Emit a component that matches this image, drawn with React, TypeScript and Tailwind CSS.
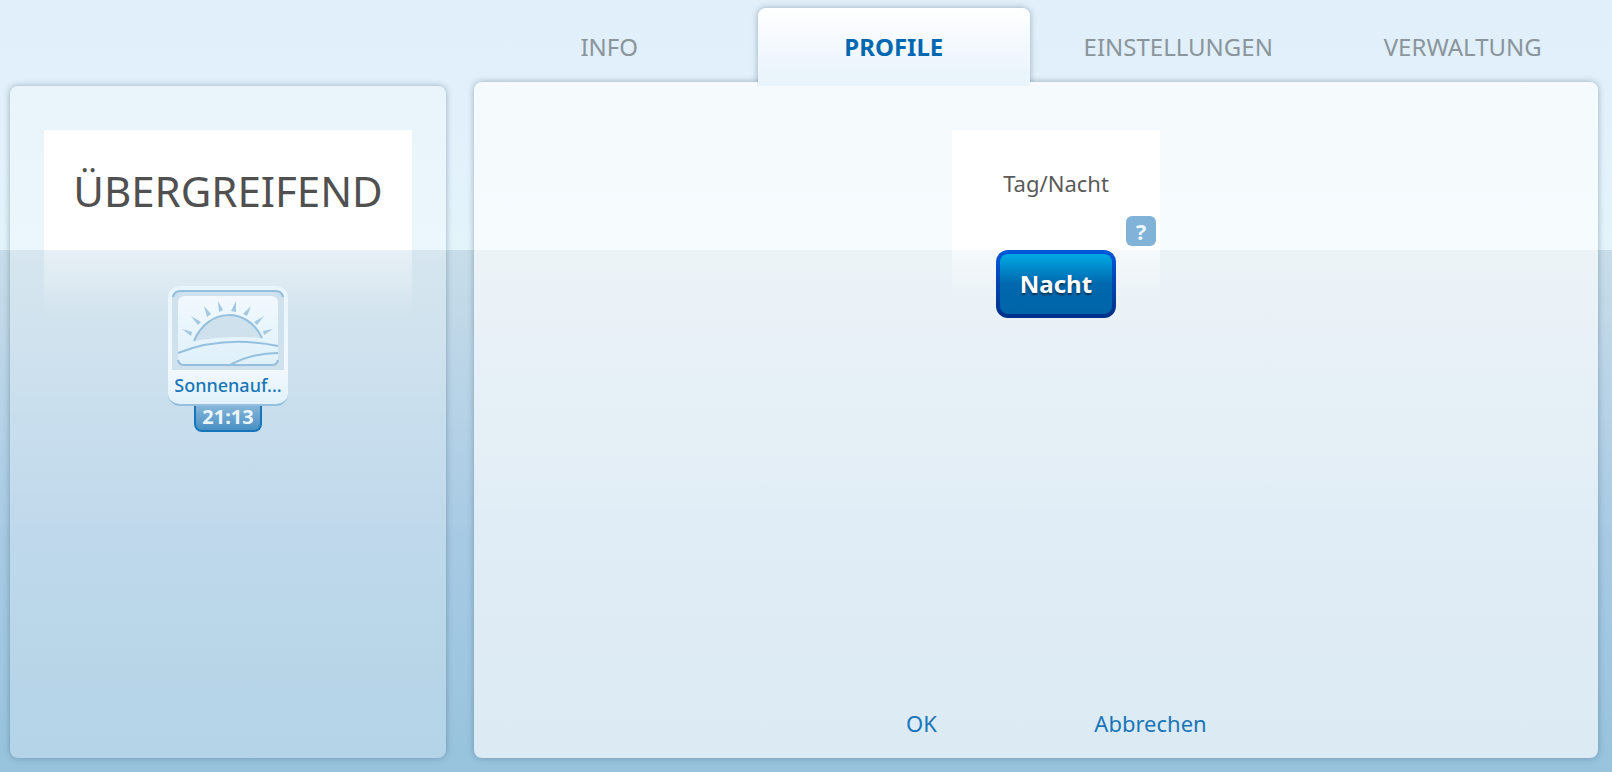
import React, { useState } from "react";

const tabs = ["INFO", "PROFILE", "EINSTELLUNGEN", "VERWALTUNG"];

const SunriseIcon = () => (
  <svg
    className="block h-20 w-28"
    aria-hidden="true"
    viewBox="0 0 112 80"
    fill="none"
  >
    <defs>
      <linearGradient id="sky" x1="0" y1="0" x2="0" y2="1">
        <stop offset="0" stopColor="#f2f9fe" />
        <stop offset="1" stopColor="#def0fa" />
      </linearGradient>
    </defs>
    <path d="M0 80V8Q0 0 8 0H104Q112 0 112 8V80Z" fill="#cfe1ed" />
    <path
      d="M1 7Q2 1 9 1H103Q110 1 111 7"
      stroke="#94bfde"
      strokeWidth="2"
    />
    <rect x="6" y="6" width="100" height="70" rx="6" fill="url(#sky)" />
    {/* Rays */}
    <g fill="#a3c8e2">
      <path d="M10 39L20 42L19 46Z" />
      <path d="M19 26L29 32L26 35Z" />
      <path d="M32 16L39 24L35 27Z" />
      <path d="M46 11L51 20L47 22Z" />
      <path d="M64 11L59 21L64 22Z" />
      <path d="M79 16L71 24L75 26Z" />
      <path d="M92 26L82 32L85 35Z" />
      <path d="M101 39L91 41L92 45Z" />
    </g>
    {/* Sun */}
    <path d="M22 51C36 17 76 17 90 48Q56 45 22 51Z" fill="#cfe1ed" />
    <path
      d="M22 51C36 17 76 17 90 48"
      stroke="#94bfde"
      strokeWidth="2"
    />
    {/* Hills */}
    <path d="M6 63Q52 45 106 56" stroke="#94bfde" strokeWidth="2" />
    <path d="M58 75Q80 63 106 63" stroke="#94bfde" strokeWidth="2" />
    <path
      d="M6 70Q7 75 12 75H100Q105 75 106 70"
      stroke="#94bfde"
      strokeWidth="2"
    />
  </svg>
);

const App = () => {
  const [active, setActive] = useState("PROFILE");

  return (
    <div className="flex min-h-screen bg-[linear-gradient(#e1effa_0,#e1f0fa_100px,#e4f4fb_250px,#c8dde9_250px,#b7d3e7_400px,#a7cae4_540px,#97c3dd_100%)] pr-3.5 pb-3.5 pl-2.5 font-['Noto_Sans',sans-serif]">
      {/* Sidebar */}
      <aside className="mt-[86px] flex w-[436px] shrink-0 flex-col items-center rounded-lg bg-white/27 px-[34px] pt-11 shadow-[0_0_6px_rgba(60,90,110,0.45)]">
        <h1 className="h-[190px] w-full bg-[linear-gradient(#fff_120px,rgba(255,255,255,0.4)_120px,transparent_188px)] pt-9 text-center text-[42px] leading-[50px] text-[#505050]">
          ÜBERGREIFEND
        </h1>
        <button className="-mt-[34px] flex flex-col items-center">
          <span className="flex w-30 flex-col items-center rounded-xl border-b-2 border-[#94bfde] bg-[linear-gradient(#e9f4fc,#f2f9fe_70%,#e2f1fa)] pt-1">
            <SunriseIcon />
            <span className="h-[34px] text-lg leading-[30px] font-medium text-[#1876b8]">
              Sonnenauf...
            </span>
          </span>
          <span className="h-[26px] w-17 rounded-b-lg border-2 border-t-0 border-[#1876b8] bg-linear-to-b from-[#85b5d8] to-[#4890c4] text-xl leading-[22px] font-bold text-[#eaf5fc]">
            21:13
          </span>
        </button>
      </aside>

      <div className="ml-7 flex flex-1 flex-col">
        {/* Tabs */}
        <nav className="z-10 -mx-[7px] grid h-[82px] grid-cols-4 pt-2">
          {tabs.map((tab) => (
            <div key={tab} className="px-[6px]">
              <button
                onClick={() => setActive(tab)}
                className={`h-[78px] w-full rounded-t-lg text-2xl ${
                  active === tab
                    ? "bg-[linear-gradient(#fff,#edf5fd_75%,#e8f4fb)] font-bold text-[#0068b0] shadow-[0_0_6px_rgba(60,90,110,0.45)] [clip-path:polygon(-8px_-8px,calc(100%_+_8px)_-8px,calc(100%_+_8px)_calc(100%_-_4px),100%_calc(100%_-_4px),100%_100%,0_100%,0_calc(100%_-_4px),-8px_calc(100%_-_4px))]"
                    : "text-[#8a959c]"
                }`}
              >
                {tab}
              </button>
            </div>
          ))}
        </nav>

        <main className="flex flex-1 flex-col rounded-lg bg-white/65 pt-12 shadow-[0_0_6px_rgba(60,90,110,0.45)]">
          <section className="ml-10 flex flex-col items-center">
            <div className="flex h-[180px] w-52 flex-col bg-[linear-gradient(#fff_120px,rgba(255,255,255,0.5)_120px,transparent_170px)] pt-9">
              <h2 className="text-center text-[22px] leading-[34px] text-[#5a5a5a]">
                Tag/Nacht
              </h2>
              <button
                aria-label="Hilfe"
                className="mt-4 mr-1 size-[30px] self-end rounded-md bg-[#81b2d7] text-[22px] leading-[30px] font-bold text-[#eef7fd]"
              >
                ?
              </button>
            </div>
            <button className="-mt-15 h-17 w-30 rounded-xl bg-linear-to-b from-[#0058dc] to-[#003088] p-1">
              <span className="flex h-full items-center justify-center rounded-lg bg-[linear-gradient(#00a8e4,#0068ae_50%,#0064a8)] text-2xl font-bold text-white [text-shadow:0_2px_2px_rgba(0,0,0,0.5)]">
                Nacht
              </span>
            </button>
          </section>

          <footer className="mt-auto flex justify-center pb-4 text-[22px] leading-[38px] text-[#1876b8]">
            <button className="w-[229px]">OK</button>
            <button className="w-[229px]">Abbrechen</button>
          </footer>
        </main>
      </div>
    </div>
  );
};

export default App;
